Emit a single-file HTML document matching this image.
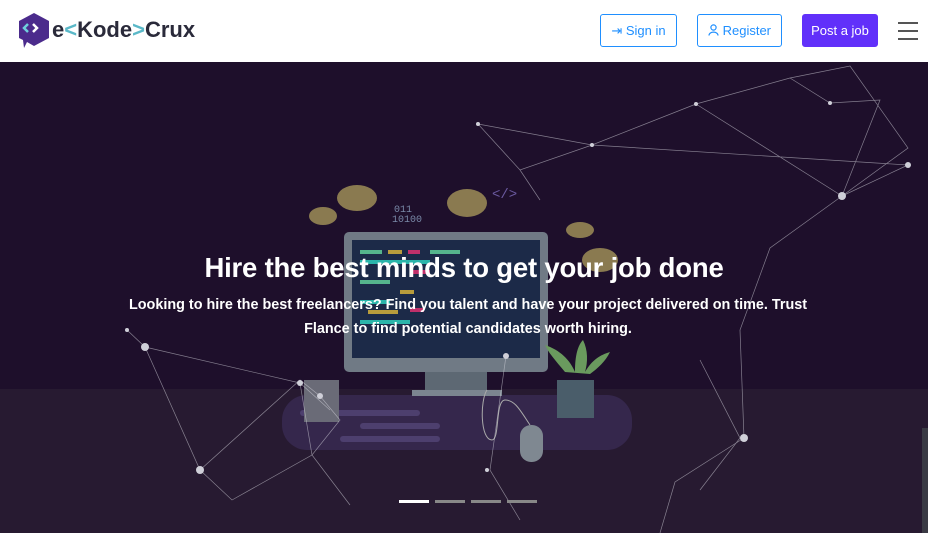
<!DOCTYPE html>
<html><head><meta charset="utf-8"><style>
*{margin:0;padding:0;box-sizing:border-box}
body{width:928px;height:533px;overflow:hidden;font-family:"Liberation Sans",sans-serif;background:#fff}
.hdr{height:62px;position:relative;background:#fff}
.logo{position:absolute;left:17px;top:12px}
.ltxt{position:absolute;left:52px;top:17px;font-weight:bold;font-size:22px;color:#2a2a3a;letter-spacing:0px}
.ltxt b{color:#5ab8c8}
.btn{position:absolute;top:14px;height:33px;border:1px solid #1f8fff;border-radius:3px;color:#1f8fff;font-size:13px;line-height:31px;text-align:center}
.hero{position:absolute;top:62px;left:0;width:928px;height:471px;background:#1e0f2b;overflow:hidden}
h1{position:absolute;top:252px;left:0;width:928px;text-align:center;color:#fff;font-size:27.5px;font-weight:bold;letter-spacing:-0.2px}
p.s{position:absolute;top:293px;left:120px;width:696px;text-align:center;color:#fff;font-size:14.4px;font-weight:bold;line-height:24px}
</style></head><body>
<div class="hdr">
<svg class="logo" width="34" height="37" viewBox="0 0 34 37"><path d="M17 1 L32 9 V26 L17 34 L10 30 L7 36 L6 28 L2 26 V9 Z" fill="#4b2b8c"/><path d="M11 12 L7 16 L11 20" stroke="#6fd0dc" stroke-width="2.5" fill="none"/><path d="M16 12 L20 16 L16 20" stroke="#fff" stroke-width="2.5" fill="none"/></svg>
<div class="ltxt">e<b>&lt;</b>Kode<b>&gt;</b>Crux</div>
<div class="btn" style="left:600px;width:77px">⇥ Sign in</div>
<div class="btn" style="left:697px;width:85px"><svg width="11" height="12" viewBox="0 0 11 12" style="vertical-align:-1px"><circle cx="5.5" cy="3.5" r="2.6" fill="none" stroke="#1f8fff" stroke-width="1.2"/><path d="M1 11.5 C1 7 10 7 10 11.5" fill="none" stroke="#1f8fff" stroke-width="1.2"/></svg> Register</div>
<div class="btn" style="left:802px;width:76px;background:#6130fa;border-color:#6130fa;color:#fff">Post a job</div>
<div style="position:absolute;left:898px;top:22px;width:20px;height:2px;background:#555;box-shadow:0 8px 0 #555,0 16px 0 #555"></div>
</div>
<div class="hero">
<svg width="928" height="471" viewBox="0 62 928 471" style="position:absolute;left:0;top:0">
<rect x="0" y="389" width="928" height="144" fill="#271a31"/>
<rect x="282" y="395" width="350" height="55" rx="25" fill="#35274c"/>
<rect x="300" y="410" width="120" height="6" rx="3" fill="#4d3f6e"/>
<rect x="360" y="423" width="80" height="6" rx="3" fill="#4d3f6e"/>
<rect x="340" y="436" width="100" height="6" rx="3" fill="#4d3f6e"/>
<rect x="304" y="380" width="35" height="42" fill="#6a6b77"/>
<rect x="344" y="232" width="204" height="140" rx="5" fill="#707a85"/>
<rect x="352" y="240" width="188" height="118" fill="#1c2a48"/>
<g fill="#55b48c"><rect x="360" y="250" width="22" height="4"/><rect x="430" y="250" width="30" height="4"/><rect x="360" y="280" width="30" height="4"/></g>
<g fill="#b89c3c"><rect x="388" y="250" width="14" height="4"/><rect x="400" y="290" width="14" height="4"/><rect x="368" y="310" width="30" height="4"/></g>
<g fill="#2bb5aa"><rect x="360" y="260" width="70" height="4"/><rect x="360" y="300" width="30" height="4"/><rect x="360" y="320" width="50" height="4"/></g>
<g fill="#c0306a"><rect x="408" y="250" width="12" height="4"/><rect x="410" y="270" width="20" height="4"/><rect x="410" y="308" width="14" height="4"/></g>
<rect x="425" y="372" width="62" height="20" fill="#5d6873"/><rect x="412" y="390" width="90" height="6" fill="#7b8590"/>
<path d="M565 372 C555 360 548 352 545 345 C560 350 570 360 575 372 C575 355 578 345 583 340 C588 350 588 362 585 372 C592 360 600 355 610 352 C605 362 598 368 590 374 Z" fill="#6a9a5e"/>
<rect x="557" y="380" width="37" height="38" fill="#4a5d6a"/>
<rect x="520" y="425" width="23" height="37" rx="11" fill="#7f8891"/>
<path d="M487 390 C480 400 480 440 492 440 C500 440 495 400 505 400 C515 400 520 410 530 425" stroke="#aaa" fill="none"/>
<g fill="#8a7a50"><ellipse cx="357" cy="198" rx="20" ry="13"/><ellipse cx="467" cy="203" rx="20" ry="14"/><ellipse cx="323" cy="216" rx="14" ry="9"/><ellipse cx="600" cy="260" rx="18" ry="12"/><ellipse cx="580" cy="230" rx="14" ry="8"/></g>
<text x="394" y="212" fill="#7a8aa8" font-size="10" font-family="Liberation Mono">011</text><text x="392" y="222" fill="#7a8aa8" font-size="10" font-family="Liberation Mono">10100</text>
<text x="492" y="198" fill="#6b5aa0" font-size="14" font-family="Liberation Mono">&lt;/&gt;</text>
<g stroke="#d8d8e0" stroke-width="0.7" opacity="0.55" fill="none">
<path d="M478 124 L592 145 L696 104 L790 78 L850 66 L908 148 L842 196 L770 248 L740 330 L744 438 L675 482 L660 533"/>
<path d="M478 124 L520 170 L592 145 L908 165 L842 196 L880 100 L830 103 L790 78 M696 104 L842 196 M520 170 L540 200"/>
<path d="M127 330 L145 347 L200 470 L300 380 L320 396 L340 420 L312 455 L232 500 L200 470 M145 347 L300 383 L330 410 M300 383 L312 455 L350 505 M506 356 L490 470 L520 520 M700 360 L740 438 L700 490"/>
</g>
<g fill="#cfcfd8"><circle cx="842" cy="196" r="4"/><circle cx="908" cy="165" r="3"/><circle cx="478" cy="124" r="2"/><circle cx="592" cy="145" r="2"/><circle cx="696" cy="104" r="2"/><circle cx="830" cy="103" r="2"/><circle cx="145" cy="347" r="4"/><circle cx="127" cy="330" r="2"/><circle cx="200" cy="470" r="4"/><circle cx="300" cy="383" r="3"/><circle cx="320" cy="396" r="3"/><circle cx="744" cy="438" r="4"/><circle cx="506" cy="356" r="3"/><circle cx="487" cy="470" r="2"/></g>
<rect x="399" y="500" width="30" height="3" fill="#fff"/><rect x="435" y="500" width="30" height="3" fill="#888"/><rect x="471" y="500" width="30" height="3" fill="#888"/><rect x="507" y="500" width="30" height="3" fill="#888"/>
<rect x="922" y="428" width="6" height="105" fill="#3a3a44"/>
</svg>
</div>
<h1>Hire the best minds to get your job done</h1>
<p class="s">Looking to hire the best freelancers? Find you talent and have your project delivered on time. Trust Flance to find potential candidates worth hiring.</p>
</body></html>
